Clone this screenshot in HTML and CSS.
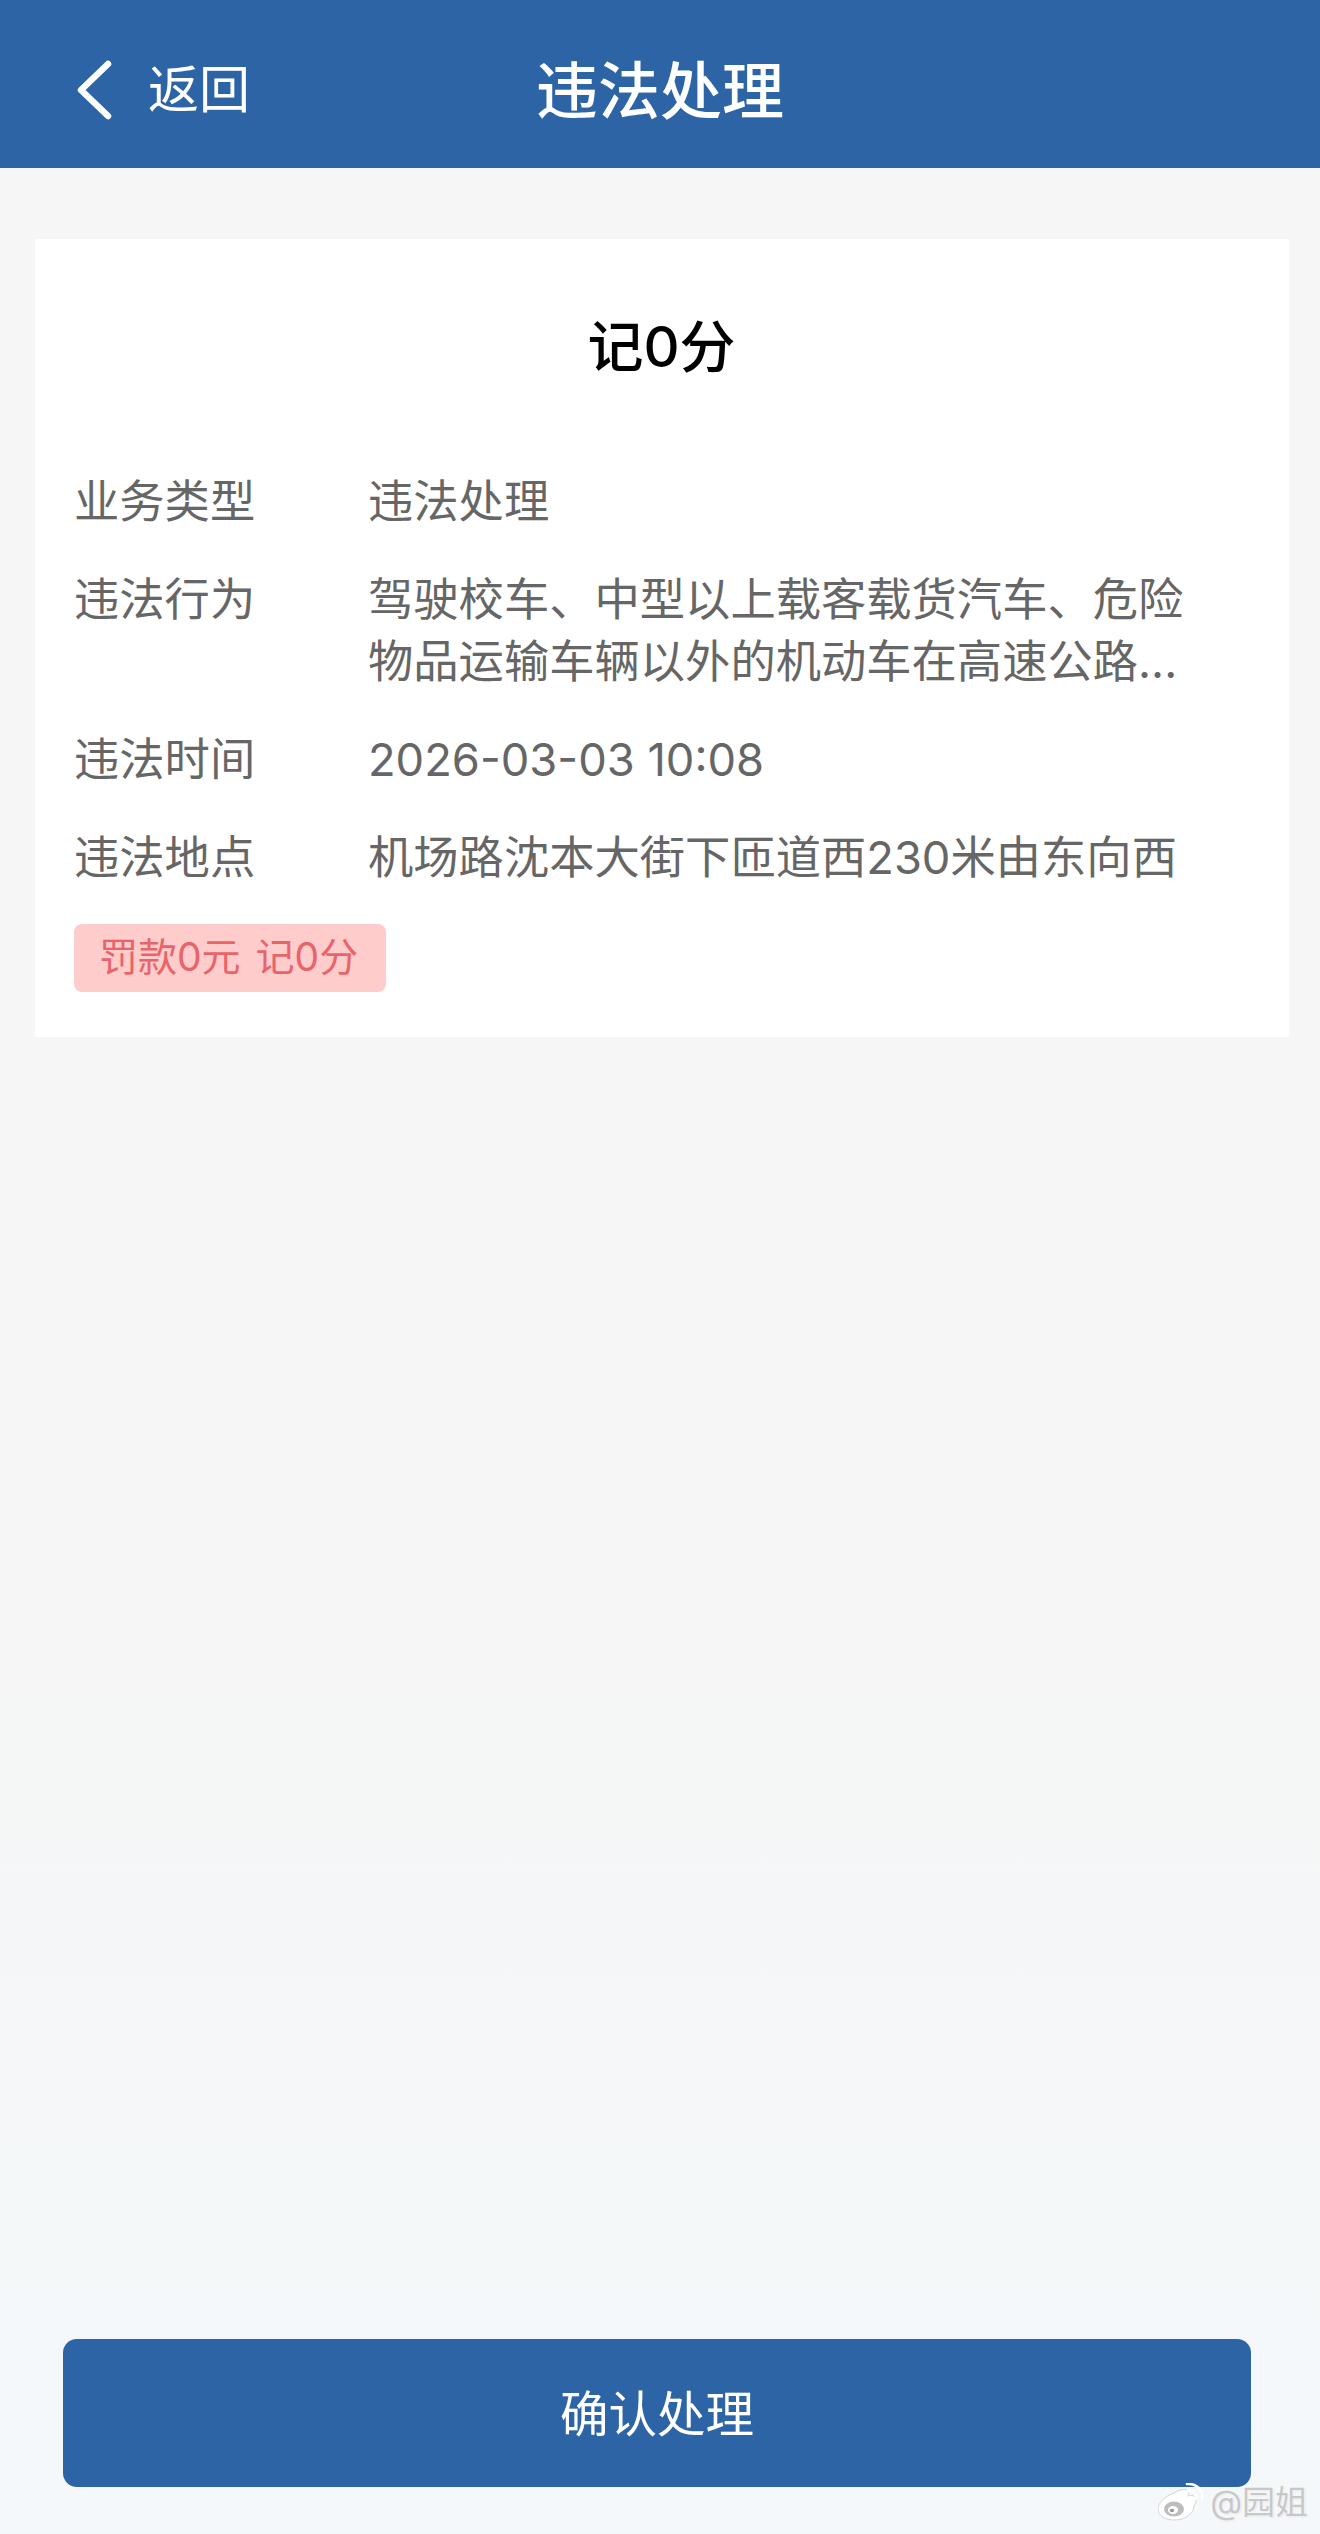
FILE: index.html
```html
<!DOCTYPE html>
<html lang="zh-CN">
<head>
    <meta charset="UTF-8">
    <title>违法处理</title>
    <link rel="stylesheet" href="styles.css">
</head>
<body>
    <div class="page">
        <header class="header">
            <a class="back">
                <svg class="back-icon" viewBox="0 0 36 60" width="36" height="60">
                    <path d="M32 4 L5 30 L32 56" fill="none" stroke="#fff" stroke-width="6.5" stroke-linecap="round" stroke-linejoin="round"/>
                </svg>
                <span class="back-text">返回</span>
            </a>
            <h1 class="header-title">违法处理</h1>
        </header>

        <main class="main">
            <section class="card">
                <h2 class="card-title">记0分</h2>
                <div class="rows">
                    <div class="row">
                        <div class="row-label">业务类型</div>
                        <div class="row-value">违法处理</div>
                    </div>
                    <div class="row">
                        <div class="row-label">违法行为</div>
                        <div class="row-value">驾驶校车、中型以上载客载货汽车、危险物品运输车辆以外的机动车在高速公路...</div>
                    </div>
                    <div class="row">
                        <div class="row-label">违法时间</div>
                        <div class="row-value">2026-03-03 10:08</div>
                    </div>
                    <div class="row">
                        <div class="row-label">违法地点</div>
                        <div class="row-value">机场路沈本大街下匝道西230米由东向西</div>
                    </div>
                </div>
                <div class="tag">
                    <span>罚款0元</span>
                    <span>记0分</span>
                </div>
            </section>
        </main>

        <footer class="footer">
            <button class="confirm">确认处理</button>
        </footer>

        <!-- watermark sits on top of the button corner -->
        <div class="watermark">
            <svg viewBox="0 0 46 38" width="46" height="38">
                <path d="M16 10c6-4 13-5 14-1 1 2 0 4 0 4 3-1 8-1 8 4 0 1 0 3-2 5 1 8-9 15-19 15C7 37 0 33 0 26c0-6 7-13 16-16z" fill="#fff" stroke="#d4d4d4" stroke-width="1"/>
                <ellipse cx="16" cy="26" rx="10" ry="7.5" fill="#bdbdbd"/>
                <ellipse cx="15" cy="27" rx="5" ry="4" fill="#fff"/>
                <ellipse cx="14" cy="27.5" rx="2.2" ry="1.8" fill="#999"/>
                <path d="M30 8c5-1 9 3 8 8M29 1c9-1 17 6 15 15" fill="none" stroke="#fff" stroke-width="2.6" stroke-linecap="round"/>
            </svg>
            <span class="watermark-text">@园姐</span>
        </div>
    </div>
</body>
</html>
```

FILE: styles.css
```css
* {
    margin: 0;
    padding: 0;
    box-sizing: border-box;
}

body {
    font-family: Inter, "Noto Sans CJK SC", sans-serif;
    background: #f6f6f6;
}

.page {
    position: relative;
    width: 1320px;
    height: 2534px;
    display: flex;
    flex-direction: column;
    background: linear-gradient(180deg, #f6f6f6 0%, #f6f6f6 65%, #f4f8fa 100%);
    overflow: hidden;
}

.header {
    position: relative;
    height: 168px;
    flex-shrink: 0;
    padding-top: 15px;
    background: #2c64a6;
    color: #fff;
    display: flex;
    align-items: center;
    justify-content: center;
}

.back {
    position: absolute;
    left: 76px;
    top: 60px;
    display: flex;
    align-items: center;
    gap: 36px;
}

.back-icon {
    display: block;
}

.back-text {
    font-size: 51px;
    line-height: 60px;
}

.header-title {
    font-size: 62px;
    font-weight: 500;
    line-height: 80px;
}

.main {
    flex: 1;
    padding: 71px 31px 0 35px;
}

.card {
    background: #fff;
    height: 798px;
    padding: 70px 40px 0 39px;
}

.card-title {
    font-size: 56px;
    font-weight: 500;
    line-height: 76px;
    text-align: center;
    color: #000;
    margin-bottom: 86px;
}

.rows {
    display: flex;
    flex-direction: column;
    gap: 36px;
}

.row {
    display: flex;
    font-size: 45.3px;
    line-height: 62px;
    color: #666;
}

.row-label {
    width: 294px;
    flex-shrink: 0;
}

.row-value {
    max-width: 830px;
}

.tag {
    display: inline-flex;
    gap: 15px;
    margin-top: 35px;
    height: 68px;
    padding: 0 28px 0 25px;
    line-height: 66px;
    font-size: 39px;
    color: #e8646a;
    background: #ffcccc;
    border-radius: 8px;
}

.footer {
    flex-shrink: 0;
    padding: 0 69px 47px 63px;
}

.confirm {
    display: block;
    width: 100%;
    height: 148px;
    padding-bottom: 5px;
    border: none;
    border-radius: 14px;
    background: #2c64a6;
    color: #fff;
    font-family: inherit;
    font-size: 48.5px;
}

.watermark {
    position: absolute;
    right: 12px;
    bottom: 13px;
    display: flex;
    align-items: center;
    gap: 6px;
}

.watermark-text {
    font-size: 33px;
    line-height: 38px;
    color: #c8c8c8;
    text-shadow: 0 0 2px #fff, 1px 1px 2px #e4e4e4;
}
```
